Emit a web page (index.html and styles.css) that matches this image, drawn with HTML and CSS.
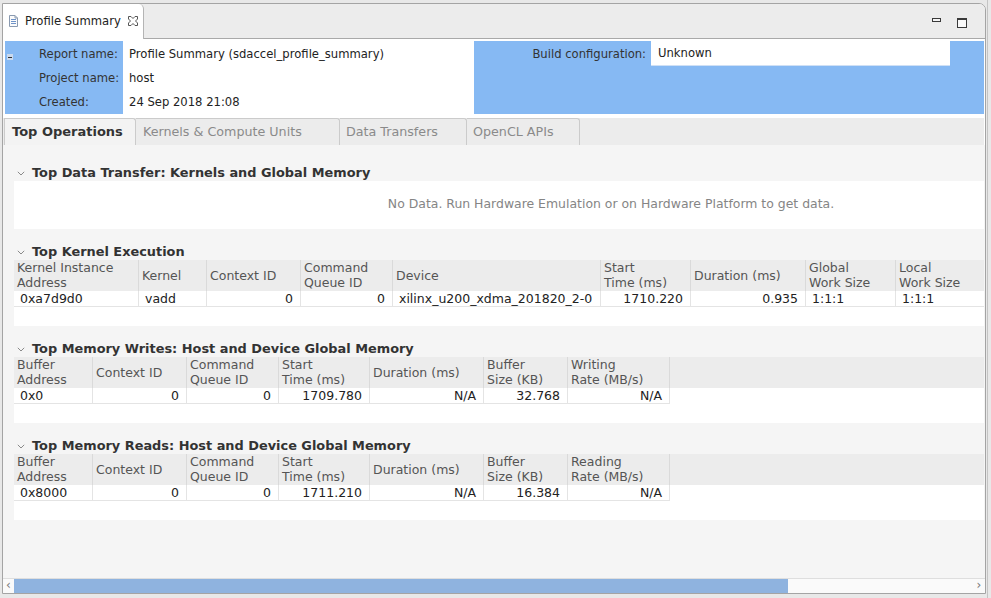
FILE: index.html
```html
<!DOCTYPE html>
<html>
<head>
<meta charset="utf-8">
<title>Profile Summary</title>
<link rel="stylesheet" href="styles.css">
</head>
<body>
<div class="window">
  <div class="titlebar">
    <div class="doc-tab">
      <svg class="doc-icon" width="9" height="12" viewBox="0 0 9 12">
        <path d="M0.5 0.5 H6 L8.5 3 V11.5 H0.5 Z" fill="#fbfbfb" stroke="#8a9ab0"/>
        <path d="M6 0.5 V3 H8.5" fill="none" stroke="#8a9ab0"/>
        <path d="M2 4.5 H7 M2 6.5 H7 M2 8.5 H7" stroke="#6f93c9" stroke-width="1"/>
      </svg>
      <span class="doc-tab-label">Profile Summary</span>
      <svg class="close-icon" width="10" height="10" viewBox="0 0 10 10">
        <path d="M0.5 0.5 H3 L5 2.5 L7 0.5 H9.5 V3 L7.5 5 L9.5 7 V9.5 H7 L5 7.5 L3 9.5 H0.5 V7 L2.5 5 L0.5 3 Z" fill="#fff" stroke="#555" stroke-width="1"/>
      </svg>
    </div>
    <div class="win-controls">
      <span class="min-btn"></span>
      <span class="max-btn"></span>
    </div>
  </div>

  <div class="report-header">
    <div class="hdr-labels">
      <span class="collapse"></span>
      <div class="label-list">
        <div class="hdr-row">Report name:</div>
        <div class="hdr-row">Project name:</div>
        <div class="hdr-row">Created:</div>
      </div>
    </div>
    <div class="hdr-values">
      <div class="hdr-row">Profile Summary (sdaccel_profile_summary)</div>
      <div class="hdr-row">host</div>
      <div class="hdr-row">24 Sep 2018 21:08</div>
    </div>
    <div class="hdr-right">
      <div class="build-label">Build configuration:</div>
      <div class="build-value">Unknown</div>
    </div>
  </div>

  <div class="tabbar">
    <div class="tab active">Top Operations</div>
    <div class="tab t-kernels">Kernels &amp; Compute Units</div>
    <div class="tab t-transfers">Data Transfers</div>
    <div class="tab t-apis">OpenCL APIs</div>
  </div>

  <div class="content">
    <div class="section first">
      <div class="sec-title"><svg class="chev" width="8" height="5" viewBox="0 0 8 5"><path d="M0.8 0.8 L4 4 L7.2 0.8" fill="none" stroke="#8a8a8a" stroke-width="1"/></svg>Top Data Transfer: Kernels and Global Memory</div>
      <div class="nodata">No Data. Run Hardware Emulation or on Hardware Platform to get data.</div>
    </div>

    <div class="section">
      <div class="sec-title"><svg class="chev" width="8" height="5" viewBox="0 0 8 5"><path d="M0.8 0.8 L4 4 L7.2 0.8" fill="none" stroke="#8a8a8a" stroke-width="1"/></svg>Top Kernel Execution</div>
      <div class="grid kernel-grid">
        <div class="th">Kernel Instance<br>Address</div>
        <div class="th">Kernel</div>
        <div class="th">Context ID</div>
        <div class="th">Command<br>Queue ID</div>
        <div class="th">Device</div>
        <div class="th">Start<br>Time (ms)</div>
        <div class="th">Duration (ms)</div>
        <div class="th">Global<br>Work Size</div>
        <div class="th last">Local<br>Work Size</div>
        <div class="td">0xa7d9d0</div>
        <div class="td">vadd</div>
        <div class="td num">0</div>
        <div class="td num">0</div>
        <div class="td">xilinx_u200_xdma_201820_2-0</div>
        <div class="td num">1710.220</div>
        <div class="td num">0.935</div>
        <div class="td">1:1:1</div>
        <div class="td last">1:1:1</div>
      </div>
      <div class="filler"></div>
    </div>

    <div class="section">
      <div class="sec-title"><svg class="chev" width="8" height="5" viewBox="0 0 8 5"><path d="M0.8 0.8 L4 4 L7.2 0.8" fill="none" stroke="#8a8a8a" stroke-width="1"/></svg>Top Memory Writes: Host and Device Global Memory</div>
      <div class="grid mem-grid">
        <div class="th">Buffer<br>Address</div>
        <div class="th">Context ID</div>
        <div class="th">Command<br>Queue ID</div>
        <div class="th">Start<br>Time (ms)</div>
        <div class="th">Duration (ms)</div>
        <div class="th">Buffer<br>Size (KB)</div>
        <div class="th">Writing<br>Rate (MB/s)</div>
        <div class="th empty"></div>
        <div class="td">0x0</div>
        <div class="td num">0</div>
        <div class="td num">0</div>
        <div class="td num">1709.780</div>
        <div class="td num">N/A</div>
        <div class="td num">32.768</div>
        <div class="td num">N/A</div>
        <div class="td empty"></div>
      </div>
      <div class="filler"></div>
    </div>

    <div class="section">
      <div class="sec-title"><svg class="chev" width="8" height="5" viewBox="0 0 8 5"><path d="M0.8 0.8 L4 4 L7.2 0.8" fill="none" stroke="#8a8a8a" stroke-width="1"/></svg>Top Memory Reads: Host and Device Global Memory</div>
      <div class="grid mem-grid">
        <div class="th">Buffer<br>Address</div>
        <div class="th">Context ID</div>
        <div class="th">Command<br>Queue ID</div>
        <div class="th">Start<br>Time (ms)</div>
        <div class="th">Duration (ms)</div>
        <div class="th">Buffer<br>Size (KB)</div>
        <div class="th">Reading<br>Rate (MB/s)</div>
        <div class="th empty"></div>
        <div class="td">0x8000</div>
        <div class="td num">0</div>
        <div class="td num">0</div>
        <div class="td num">1711.210</div>
        <div class="td num">N/A</div>
        <div class="td num">16.384</div>
        <div class="td num">N/A</div>
        <div class="td empty"></div>
      </div>
      <div class="filler"></div>
    </div>
  </div>

  <div class="hscroll">
    <span class="arrow left">&#8249;</span>
    <div class="thumb"></div>
    <span class="arrow right">&#8250;</span>
  </div>
</div>
</body>
</html>
```

FILE: styles.css
```css
* { box-sizing: border-box; }

html, body {
  margin: 0;
  padding: 0;
}

body {
  width: 991px;
  height: 598px;
  overflow: hidden;
  background: #e8e8e8 linear-gradient(to right, transparent 987px, #c4c4c4 987px, #c4c4c4 988px, transparent 988px);
  font-family: "DejaVu Sans", "Liberation Sans", sans-serif;
  color: #333;
}

.window {
  margin: 3px 0 0 2px;
  width: 984px;
  height: 591px;
  border: 1px solid #a4a4a4;
  border-top-right-radius: 7px;
  background: #ffffff;
  display: flex;
  flex-direction: column;
  overflow: hidden;
}

/* ---------- title bar ---------- */
.titlebar {
  height: 35px;
  flex: none;
  background: #ececec;
  border-bottom: 1px solid #a9a9a9;
  display: flex;
  align-items: stretch;
  justify-content: space-between;
}

.doc-tab {
  width: 141px;
  margin-bottom: -1px;
  background: #ffffff;
  border-right: 1px solid #b4b4b4;
  border-top-right-radius: 5px;
  display: flex;
  align-items: center;
  padding: 0 0 2px 6px;
  font-size: 11.6px;
  color: #222;
}

.doc-icon { flex: none; margin-right: 7px; margin-top: 1px; }
.doc-tab-label { white-space: nowrap; }
.close-icon { flex: none; margin-left: 7px; margin-top: 1px; }

.win-controls {
  display: flex;
  align-items: flex-start;
  padding: 14px 18px 0 0;
}

.min-btn {
  width: 9px;
  height: 4px;
  border: 1px solid #3a3a3a;
  background: #f4f4f4;
  margin-right: 16px;
}

.max-btn {
  width: 10px;
  height: 10px;
  border: 1px solid #3a3a3a;
  border-top-width: 2px;
  background: #fafafa;
}

/* ---------- report header ---------- */
.report-header {
  flex: none;
  display: flex;
  padding: 2px 1px 4px 2px;
  font-size: 11.6px;
  color: #222;
}

.hdr-row {
  height: 24px;
  line-height: 24px;
  white-space: nowrap;
}
.hdr-row:first-child { height: 25px; line-height: 26px; }

.hdr-labels {
  width: 118px;
  background: #86b9f3;
  display: flex;
  color: #333;
}

.collapse {
  flex: none;
  width: 6px;
  height: 6px;
  margin: 13px 0 0 2px;
  background: #c9d9ee;
  position: relative;
}
.collapse::after {
  content: "";
  position: absolute;
  left: 1px;
  top: 3px;
  width: 4px;
  height: 1px;
  background: #333;
}

.label-list {
  flex: 1;
  text-align: left;
  padding-left: 26px;
}

.hdr-values {
  width: 350px;
  padding-left: 6px;
}

.hdr-right {
  flex: 1;
  margin-left: 1px;
  background: #86b9f3;
  display: flex;
  align-items: flex-start;
  height: 73px;
}

.build-label {
  width: 177px;
  height: 25px;
  line-height: 26px;
  text-align: right;
  padding-right: 5px;
  color: #333;
}

.build-value {
  width: 299px;
  height: 25px;
  line-height: 25px;
  background: #ffffff;
  border-bottom: 1px solid #cfe0f5;
  padding-left: 7px;
}

/* ---------- tab bar ---------- */
.tabbar {
  flex: none;
  height: 27px;
  margin-right: 1px;
  background: #ececec;
  display: flex;
  align-items: stretch;
  padding-left: 1px;
  font-size: 12.7px;
}

.tab {
  border: 1px solid #cbcbcb;
  border-bottom: none;
  border-left: none;
  border-top-right-radius: 3px;
  padding: 5px 0 0 8px;
  color: #8a8a8a;
  white-space: nowrap;
}
.tab.active {
  width: 132px;
  border-left: 1px solid #cbcbcb;
  background: #f3f3f3;
  color: #333;
  font-weight: bold;
  font-size: 13px;
  padding-left: 7px;
}
.t-kernels { width: 204px; padding-left: 7px; }
.t-transfers { width: 127px; padding-left: 6px; }
.t-apis { width: 113px; padding-left: 6px; }

/* ---------- content ---------- */
.content {
  flex: 1;
  background: #f5f5f5;
  padding: 0 1px 0 11px;
  font-size: 12.5px;
}

.section { padding-top: 13px; }
.section.first { padding-top: 18px; }

.sec-title {
  height: 18px;
  line-height: 18px;
  padding-top: 2px;
  font-size: 12.9px;
  font-weight: bold;
  color: #333;
  display: flex;
  align-items: center;
  white-space: nowrap;
}

.chev { flex: none; margin: 0 7px 0 3px; }

.nodata {
  height: 48px;
  line-height: 46px;
  background: #ffffff;
  color: #858585;
  text-align: center;
  padding-left: 224px;
  font-size: 12.45px;
}

.grid {
  display: grid;
  background: #ffffff;
}

.kernel-grid {
  grid-template-columns: 125px 68px 94px 92px 208px 90px 115px 90px 1fr;
}

.mem-grid {
  grid-template-columns: 79px 94px 92px 91px 114px 84px 102px 1fr;
}

.th {
  height: 31px;
  padding: 0 3px 1px 3px;
  background: #ececec;
  border-right: 1px solid #dadada;
  color: #555;
  line-height: 15px;
  display: flex;
  align-items: center;
  white-space: nowrap;
}
.th.last, .th.empty { border-right: none; }

.td {
  height: 16px;
  line-height: 15px;
  padding: 0 7px 0 6px;
  border-right: 1px solid #e4e4e4;
  border-bottom: 1px solid #e4e4e4;
  color: #222;
  white-space: nowrap;
  overflow: hidden;
}
.td.num { text-align: right; }
.td.last { border-right: none; }
.td.empty { border: none; }

.filler {
  height: 19px;
  background: #ffffff;
}

/* ---------- scrollbar ---------- */
.hscroll {
  flex: none;
  height: 15px;
  border-top: 1px solid #dedede;
  background: #fafafa;
  display: flex;
  align-items: stretch;
}

.thumb {
  width: 774px;
  background: #8fb3df;
}

.arrow {
  width: 11px;
  font-size: 12px;
  line-height: 13px;
  color: #777;
  text-align: center;
}
.arrow.right {
  margin-left: auto;
  width: 12px;
}
```
